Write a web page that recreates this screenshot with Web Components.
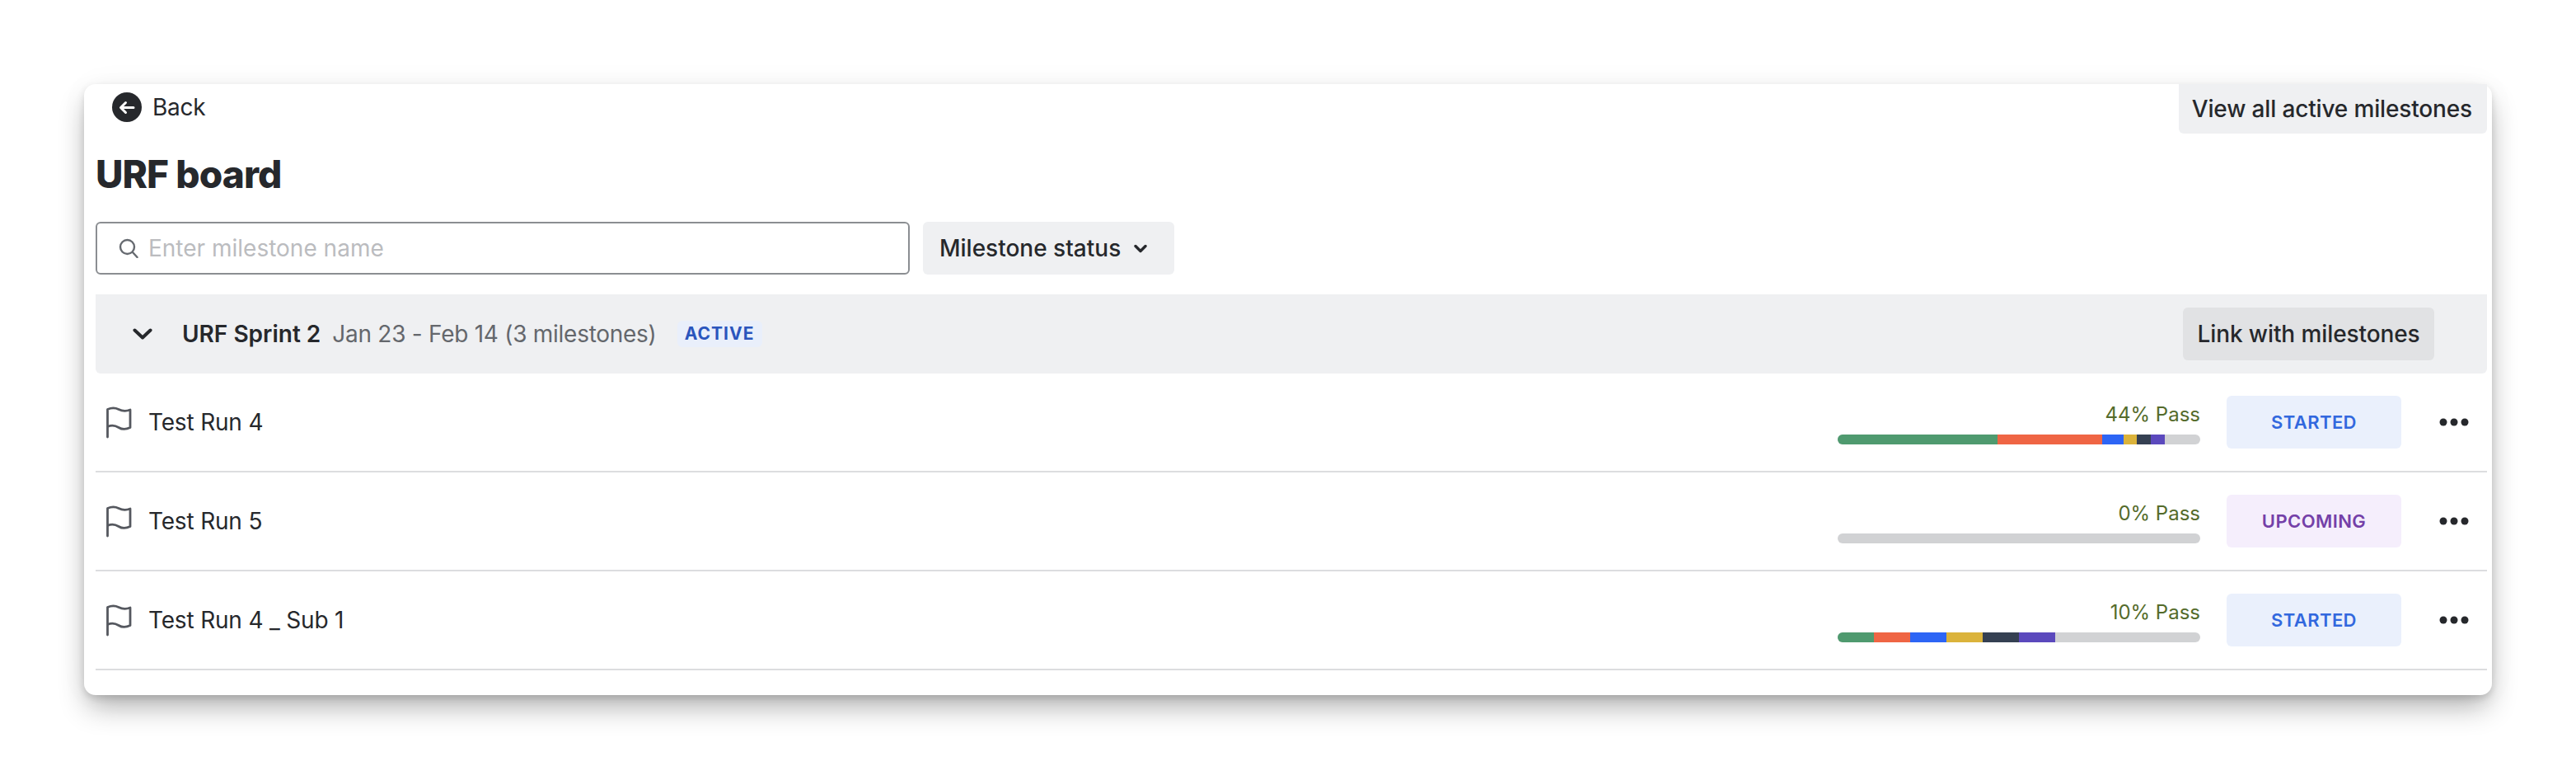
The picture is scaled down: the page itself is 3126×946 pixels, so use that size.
<!DOCTYPE html>
<html>
<head>
<meta charset="utf-8">
<title>URF board</title>
<style>
  html, body { margin: 0; background: #fff; }
  body { box-sizing: border-box; min-height: 946px; padding: 102px 0 0 102px; font-family: Inter, "Liberation Sans", sans-serif; color: #26282c; overflow: hidden; }
</style>
</head>
<body>
<board-card>
  <top-bar></top-bar>
  <board-title>URF board</board-title>
  <filter-bar></filter-bar>
  <sprint-header name="URF Sprint 2" dates="Jan 23 - Feb 14 (3 milestones)"></sprint-header>
  <milestone-row name="Test Run 4" pass="44" status="started" segments="44,29,5.8,3.8,3.8,3.8"></milestone-row>
  <milestone-row name="Test Run 5" pass="0" status="upcoming" segments=""></milestone-row>
  <milestone-row name="Test Run 4 _ Sub 1" pass="10" status="started" segments="10,10,10,10,10,10"></milestone-row>
</board-card>

<script>
customElements.define('board-card', class extends HTMLElement {
  constructor() {
    super();
    const root = this.attachShadow({ mode: 'open' });
    root.innerHTML = `
      <style>
        :host {
          display: block;
          box-sizing: border-box;
          width: 2922px;
          height: 741px;
          padding: 0 6px 0 14px;
          background: #fff;
          border-radius: 14px;
          box-shadow: 0 4px 8px rgba(0,0,0,.12), 0 18px 34px -4px rgba(0,0,0,.3), 0 0 40px rgba(0,0,0,.03);
        }
      </style>
      <slot></slot>
    `;
  }
});

customElements.define('board-title', class extends HTMLElement {
  constructor() {
    super();
    const root = this.attachShadow({ mode: 'open' });
    root.innerHTML = `
      <style>
        :host {
          display: block;
          margin: 21px 0 30px;
          font-size: 46px;
          line-height: 56px;
          font-weight: 800;
          letter-spacing: -0.9px;
        }
      </style>
      <slot></slot>
    `;
  }
});

customElements.define('top-bar', class extends HTMLElement {
  constructor() {
    super();
    const root = this.attachShadow({ mode: 'open' });
    root.innerHTML = `
      <style>
        :host { display: flex; justify-content: space-between; height: 60px; }
        .back { display: flex; align-items: center; gap: 13px; height: 56px; padding-left: 20px; font-size: 28px; letter-spacing: -0.3px; }
        .view {
          box-sizing: border-box; width: 374px; display: flex; align-items: center; justify-content: flex-end;
          padding-right: 18px; background: #eff0f2; border-radius: 0 0 6px 6px;
          font-size: 28px; font-weight: 500; letter-spacing: -0.15px;
        }
        svg { display: block; }
      </style>
      <div class="back">
        <svg width="36" height="36" viewBox="0 0 36 36">
          <circle cx="18" cy="18" r="18" fill="#26282c"/>
          <path d="M26 18.5H12M16.5 12.5L10.5 18.5L16.5 24.5" fill="none" stroke="#fff" stroke-width="3" stroke-linecap="round" stroke-linejoin="round"/>
        </svg>
        <span>Back</span>
      </div>
      <div class="view">View all active milestones</div>
    `;
  }
});

customElements.define('filter-bar', class extends HTMLElement {
  constructor() {
    super();
    const root = this.attachShadow({ mode: 'open' });
    root.innerHTML = `
      <style>
        :host { display: flex; gap: 16px; height: 64px; margin-bottom: 24px; }
        .search {
          box-sizing: border-box; width: 988px; display: flex; align-items: center; gap: 12px;
          padding-left: 26px; border: 2px solid #8b8e92; border-radius: 6px;
          font-size: 28px; color: #bbbcbf;
        }
        .status {
          box-sizing: border-box; width: 305px; display: flex; align-items: center; gap: 16px;
          padding-left: 20px; background: #eff0f2; border-radius: 6px;
          font-size: 28px; font-weight: 500; color: #26282c;
        }
        svg { display: block; flex: none; }
      </style>
      <div class="search">
        <svg width="24" height="24" viewBox="0 0 24 24" fill="none" stroke="#666a70" stroke-width="2.4" stroke-linecap="round">
          <circle cx="10.5" cy="10.5" r="8.5"/><path d="M17 17L22.5 23"/>
        </svg>
        <span>Enter milestone name</span>
      </div>
      <div class="status">
        <span>Milestone status</span>
        <svg width="16" height="11" viewBox="0 0 16 11" fill="none" stroke="#26282c" stroke-width="3.4" stroke-linecap="round" stroke-linejoin="round">
          <path d="M2 2.5L8 8.5L14 2.5"/>
        </svg>
      </div>
    `;
  }
});

customElements.define('sprint-header', class extends HTMLElement {
  constructor() {
    super();
    const root = this.attachShadow({ mode: 'open' });
    root.innerHTML = `
      <style>
        :host {
          display: flex; align-items: center; box-sizing: border-box; height: 96px;
          padding: 0 64px 0 45px; background: #eff0f2; border-radius: 0 0 6px 6px; font-size: 28px;
        }
        svg { display: block; flex: none; margin-right: 36px; }
        .name { font-weight: 600; margin-right: 14px; }
        .dates { color: #64676c; margin-right: 25px; letter-spacing: -0.27px; }
        .chip {
          box-sizing: border-box; width: 103px; height: 32px; line-height: 32px; text-align: center;
          background: #e9effb; border-radius: 6px;
          color: #2a55bd; font-size: 21px; font-weight: 700; letter-spacing: 1px;
        }
        .link {
          margin-left: auto; width: 305px; height: 64px; display: flex; align-items: center; justify-content: center;
          background: #e1e2e4; border-radius: 6px; font-weight: 500; letter-spacing: -0.1px;
        }
      </style>
      <svg width="24" height="16" viewBox="0 0 24 16" fill="none" stroke="#26282c" stroke-width="4" stroke-linecap="round" stroke-linejoin="round">
        <path d="M2.5 3.5L12 12.5L21.5 3.5"/>
      </svg>
      <span class="name"></span>
      <span class="dates"></span>
      <span class="chip">ACTIVE</span>
      <div class="link">Link with milestones</div>
    `;
    root.querySelector('.name').textContent = this.getAttribute('name');
    root.querySelector('.dates').textContent = this.getAttribute('dates');
  }
});

const SEGMENT_COLORS = ['#4f9a6f', '#ef6544', '#2d65f5', '#dbb33b', '#354052', '#5b49bd'];

customElements.define('milestone-row', class extends HTMLElement {
  constructor() {
    super();
    const root = this.attachShadow({ mode: 'open' });
    root.innerHTML = `
      <style>
        :host {
          display: flex; align-items: center; box-sizing: border-box; height: 120px;
          padding: 0 22px 0 12px; border-bottom: 2px solid #dcdddf; font-size: 28px;
        }
        .flag { display: block; flex: none; margin-right: 20px; }
        .name { flex: 1; letter-spacing: -0.18px; }
        .progress { width: 440px; margin-right: 32px; padding-top: 4px; }
        .pass { text-align: right; font-size: 24px; line-height: 28px; color: #546b2b; margin-bottom: 10px; }
        .bar { display: flex; height: 12px; background: #d1d2d4; border-radius: 6px; overflow: hidden; }
        .bar i { display: block; height: 100%; }
        .status {
          width: 212px; height: 64px; display: flex; align-items: center; justify-content: center;
          border-radius: 6px; font-size: 22px; font-weight: 600; letter-spacing: 0.4px;
        }
        .status.started { background: #eaf0fc; color: #3268de; }
        .status.upcoming { background: #f5eefc; color: #7440a8; }
        .more { display: block; flex: none; margin-left: 46px; }
      </style>
      <svg class="flag" width="32" height="39" viewBox="0 0 32 39" fill="none" stroke="#55585f" stroke-width="2.8" stroke-linecap="round" stroke-linejoin="round">
        <path d="M2.5 37V3.5C7 1.5 12 1.5 16 3.5S25 6 30 4V25.5C25 28 20 28 16 25.5S7 22.5 2.5 24.5"/>
      </svg>
      <span class="name"></span>
      <div class="progress">
        <div class="pass"></div>
        <div class="bar"></div>
      </div>
      <div class="status"></div>
      <svg class="more" width="36" height="12" viewBox="0 0 36 12" fill="#26282c">
        <circle cx="5" cy="6" r="4.5"/><circle cx="18" cy="6" r="4.5"/><circle cx="31" cy="6" r="4.5"/>
      </svg>
    `;
    root.querySelector('.name').textContent = this.getAttribute('name');
    root.querySelector('.pass').textContent = this.getAttribute('pass') + '% Pass';
    const status = root.querySelector('.status');
    status.classList.add(this.getAttribute('status'));
    status.textContent = this.getAttribute('status').toUpperCase();
    const bar = root.querySelector('.bar');
    const segments = this.getAttribute('segments');
    if (segments) {
      segments.split(',').forEach((w, i) => {
        const seg = document.createElement('i');
        seg.style.width = w + '%';
        seg.style.background = SEGMENT_COLORS[i];
        bar.appendChild(seg);
      });
    }
  }
});
</script>
</body>
</html>
